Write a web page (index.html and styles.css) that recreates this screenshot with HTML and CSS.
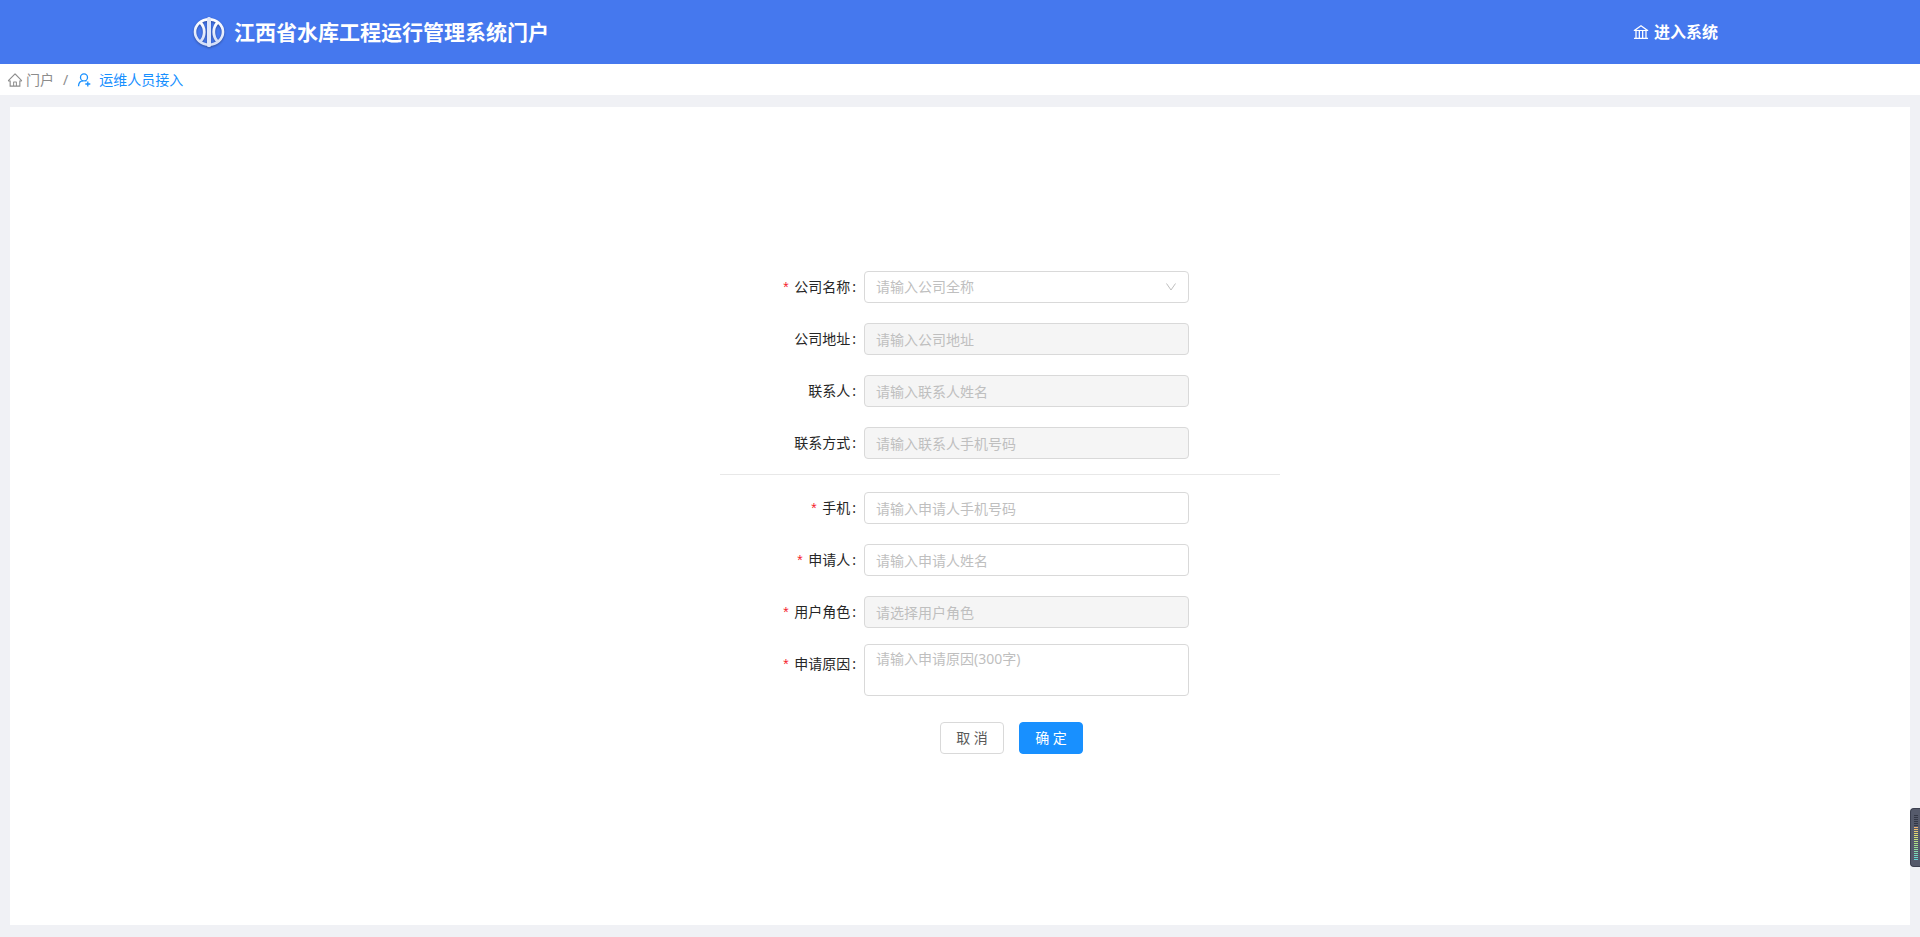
FILE: index.html
```html
<!DOCTYPE html>
<html lang="zh-CN">
<head>
<meta charset="utf-8">
<title>江西省水库工程运行管理系统门户</title>
<link rel="stylesheet" href="styles.css">
</head>
<body>
<header class="header">
  <div class="brand">
    <svg class="logo" viewBox="0 0 32 32" aria-hidden="true">
      <defs>
        <linearGradient id="silver" x1="0" y1="0" x2="0" y2="1">
          <stop offset="0" stop-color="#ffffff"/>
          <stop offset="1" stop-color="#d3def8"/>
        </linearGradient>
      </defs>
      <g fill="none" stroke="url(#silver)">
        <ellipse cx="16" cy="16" rx="14" ry="12.6" stroke-width="2.6"/>
        <path d="M7.500 6.500C12.500 12 12.500 20 7.500 25.500M24.500 6.500C19.500 12 19.500 20 24.500 25.500" stroke-width="2.800"/>
      </g>
      <rect x="14" y="1" width="4" height="30" rx="1.500" fill="#dde6fb"/>
    </svg>
    <h1 class="title">江西省水库工程运行管理系统门户</h1>
  </div>
  <a class="enter" href="#">
    <svg class="icon-bank" viewBox="0 0 1024 1024" fill="currentColor" aria-hidden="true"><path d="M894 462c30.900 0 43.800-39.700 18.700-58L530.800 126.200a31.810 31.810 0 0 0-37.600 0L111.300 404c-25.100 18.200-12.200 58 18.800 58H192v374h-72c-4.400 0-8 3.600-8 8v52c0 4.400 3.600 8 8 8h784c4.400 0 8-3.600 8-8v-52c0-4.400-3.600-8-8-8h-72V462h62zM512 196.700l271.100 197.200H240.900L512 196.700zM264 462h117v374H264V462zm189 0h117v374H453V462zm307 374H642V462h118v374z"/></svg>
    <span>进入系统</span>
  </a>
</header>
<nav class="breadcrumb" aria-label="面包屑">
  <a class="crumb" href="#">
    <svg class="icon-home" viewBox="0 0 1024 1024" fill="currentColor" aria-hidden="true"><path d="M946.500 505L560.100 118.800l-25.900-25.900a31.500 31.500 0 0 0-44.400 0L77.500 505a63.900 63.900 0 0 0-18.800 46c.4 35.200 29.700 63.300 64.900 63.300h42.500V940h691.800V614.300h43.400c17.100 0 33.200-6.700 45.300-18.800a63.600 63.600 0 0 0 18.700-45.300c0-17-6.700-33.100-18.800-45.200zM568 868H456V664h112v204zm217.900-325.700V868H632V640c0-22.100-17.900-40-40-40H432c-22.100 0-40 17.900-40 40v228H238.100V542.300h-96l370-369.700 23.100 23.100L882 542.300h-96.100z"/></svg>
    <span>门户</span>
  </a>
  <span class="separator">/</span>
  <a class="crumb crumb-active" href="#">
    <svg class="icon-user" viewBox="0 0 14 14" fill="none" stroke="currentColor" stroke-width="1.300" aria-hidden="true"><circle cx="7" cy="4.400" r="3.500"/><path d="M1.500 13.200C1.600 10 3.400 8 6 7.900M8.300 7.900H9.500M10.800 8.500V13.500M8.300 11H13.300"/></svg>
    <span>运维人员接入</span>
  </a>
</nav>
<main class="panel">
  <form class="form">
    <div class="row">
      <label class="label required" for="company">公司名称<span class="colon">:</span></label>
      <div class="select-box">
        <select class="control select" id="company" required><option value="">请输入公司全称</option></select>
        <svg class="arrow" viewBox="0 0 12 12" fill="none" stroke="currentColor" aria-hidden="true"><path d="M1.500 2.500L6 9L10.500 2.500"/></svg>
      </div>
    </div>
    <div class="row">
      <label class="label" for="address">公司地址<span class="colon">:</span></label>
      <input class="control" id="address" type="text" placeholder="请输入公司地址" disabled>
    </div>
    <div class="row">
      <label class="label" for="contact">联系人<span class="colon">:</span></label>
      <input class="control" id="contact" type="text" placeholder="请输入联系人姓名" disabled>
    </div>
    <div class="row">
      <label class="label" for="contact-phone">联系方式<span class="colon">:</span></label>
      <input class="control" id="contact-phone" type="text" placeholder="请输入联系人手机号码" disabled>
    </div>
    <hr class="divider">
    <div class="row">
      <label class="label required" for="phone">手机<span class="colon">:</span></label>
      <input class="control" id="phone" type="tel" placeholder="请输入申请人手机号码">
    </div>
    <div class="row">
      <label class="label required" for="applicant">申请人<span class="colon">:</span></label>
      <input class="control" id="applicant" type="text" placeholder="请输入申请人姓名">
    </div>
    <div class="row">
      <label class="label required" for="role">用户角色<span class="colon">:</span></label>
      <input class="control" id="role" type="text" placeholder="请选择用户角色" disabled>
    </div>
    <div class="row row-reason">
      <label class="label required" for="reason">申请原因<span class="colon">:</span></label>
      <textarea class="control textarea" id="reason" placeholder="请输入申请原因(300字)"></textarea>
    </div>
    <div class="actions">
      <button class="button" type="button">取 消</button>
      <button class="button button-primary" type="submit">确 定</button>
    </div>
  </form>
</main>
<aside class="meter" aria-hidden="true"><div class="bars"></div></aside>
</body>
</html>
```
FILE: styles.css
```css
* {
  box-sizing: border-box;
}

body {
  display: flex;
  flex-direction: column;
  min-height: 100vh;
  margin: 0;
  background: #f0f1f5;
  color: #262626;
  font: 14px/20px "Noto Sans", "Noto Sans CJK SC", sans-serif;
}

a {
  color: inherit;
  text-decoration: none;
}

.header {
  display: flex;
  align-items: center;
  justify-content: space-between;
  height: 64px;
  padding: 0 202px 0 193px;
  background: #4578ee;
  color: #fff;
}

.brand {
  display: flex;
  align-items: center;
  gap: 9px;
}

.logo {
  width: 32px;
  height: 32px;
  filter: drop-shadow(0 1px 1px rgba(30, 50, 110, 0.6));
}

.title {
  margin: 0;
  font-size: 21px;
  line-height: 32px;
  font-weight: 700;
}

.enter {
  display: flex;
  align-items: center;
  gap: 4px;
  font-size: 16px;
  line-height: 24px;
  font-weight: 700;
}

.icon-bank {
  width: 18px;
  height: 18px;
}

.breadcrumb {
  display: flex;
  align-items: center;
  gap: 9px;
  height: 31px;
  padding: 0 7px;
  background: #fff;
  color: #8c8c8c;
}

.crumb {
  display: flex;
  align-items: center;
  gap: 3px;
}

.crumb-active {
  gap: 8px;
  color: #1890ff;
}

.icon-home {
  width: 16px;
  height: 16px;
}

.icon-user {
  width: 14px;
  height: 14px;
}

.panel {
  display: flex;
  flex: 1;
  align-items: center;
  justify-content: center;
  margin: 12px 10px;
  padding: 0 0 7px 80px;
  background: #fff;
}

.form {
  width: 560px;
}

.row {
  display: grid;
  grid-template-columns: 144px 325px;
}

.row + .row {
  margin-top: 20px;
}

.label {
  display: flex;
  justify-content: flex-end;
  height: 32px;
  line-height: 32px;
}

.colon {
  margin: 0 8px 0 2px;
}

.required::before {
  content: "*";
  margin-right: 4px;
  color: #f5222d;
  font-family: "Liberation Mono", monospace;
  line-height: 36px;
}

.control {
  width: 100%;
  height: 32px;
  padding: 4px 11px;
  border: 1px solid #d9d9d9;
  border-radius: 4px;
  background: #fff;
  color: #262626;
  font: inherit;
}

.control::placeholder {
  color: #bfbfbf;
  opacity: 1;
}

.control:disabled {
  background: #f5f5f5;
}

.select-box {
  position: relative;
}

.select {
  display: block;
  appearance: none;
  color: #bfbfbf;
}

.arrow {
  position: absolute;
  top: 10px;
  right: 12px;
  width: 12px;
  height: 12px;
  color: #bfbfbf;
  pointer-events: none;
}

.divider {
  margin: 15px 0 17px;
  border: 0;
  border-top: 1px solid #e8e8e8;
}

.row + .row-reason {
  margin-top: 16px;
}

.row-reason .label {
  margin-top: 4px;
}

.textarea {
  display: block;
  height: 52px;
  resize: none;
}

.actions {
  display: flex;
  gap: 15px;
  margin-top: 26px;
  padding-left: 220px;
}

.button {
  width: 64px;
  height: 32px;
  padding: 0;
  border: 1px solid #d9d9d9;
  border-radius: 4px;
  background: #fff;
  color: #595959;
  font: inherit;
}

.button-primary {
  border-color: #1890ff;
  background: #1890ff;
  color: #fff;
}

.meter {
  position: fixed;
  right: 0;
  bottom: 70px;
  width: 10px;
  height: 59px;
  padding: 6px 2px 0 3px;
  border: 1px solid #3c4050;
  border-right: 0;
  border-radius: 4px 0 0 4px;
  background: #555a6b;
}

.bars {
  width: 4px;
  height: 45px;
  background:
    repeating-linear-gradient(transparent 0 1px, #555a6b 1px 2px),
    linear-gradient(#343846 0 12px, #f0b070 12px, #dfe070 20px, #9fe08c 31px, #5fd6d6 45px);
}
```
